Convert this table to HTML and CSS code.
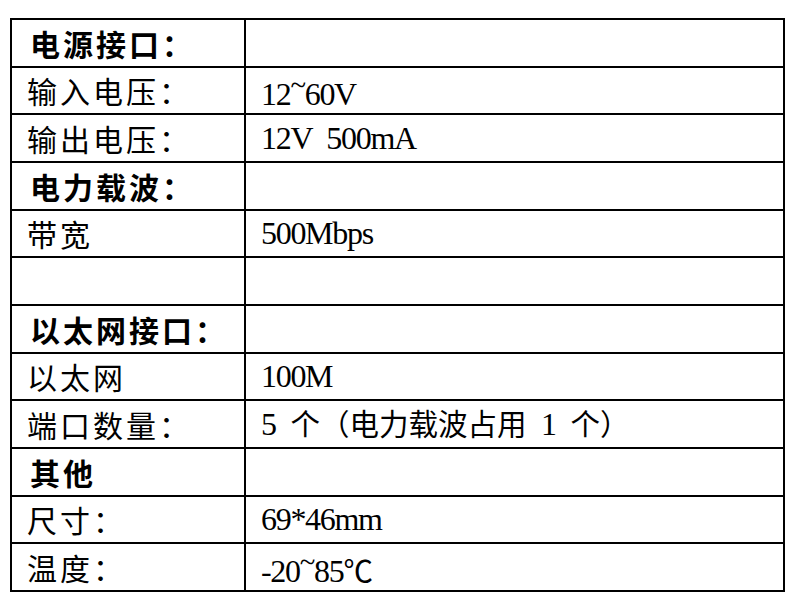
FILE: index.html
```html
<!DOCTYPE html>
<html lang="zh-CN">
<head>
<meta charset="utf-8">
<title>参数</title>
<link rel="stylesheet" href="styles.css">
</head>
<body>
<table class="spec">
  <colgroup><col class="c1"><col class="c2"></colgroup>
  <tbody>
    <tr><td class="k head">电源接口：</td><td class="v"></td></tr>
    <tr><td class="k">输入电压：</td><td class="v"><span class="lat">12<span class="tl">~</span>60V</span></td></tr>
    <tr><td class="k">输出电压：</td><td class="v"><span class="lat">12V 500mA</span></td></tr>
    <tr><td class="k head">电力载波：</td><td class="v"></td></tr>
    <tr><td class="k">带宽</td><td class="v"><span class="lat">500Mbps</span></td></tr>
    <tr><td class="k"></td><td class="v"></td></tr>
    <tr><td class="k head">以太网接口：</td><td class="v"></td></tr>
    <tr><td class="k">以太网</td><td class="v"><span class="lat">100M</span></td></tr>
    <tr><td class="k">端口数量：</td><td class="v"><span class="lat">5 </span>个（电力载波占用<span class="lat"> 1 </span>个）</td></tr>
    <tr><td class="k head">其他</td><td class="v"></td></tr>
    <tr><td class="k">尺寸：</td><td class="v"><span class="lat">69*46mm</span></td></tr>
    <tr><td class="k">温度：</td><td class="v"><span class="lat">-20<span class="tl">~</span>85</span>℃</td></tr>
  </tbody>
</table>
</body>
</html>
```
FILE: styles.css
```css
html, body {
  margin: 0;
  padding: 0;
  background: #fff;
}

body {
  color: #000;
  font-family: "Liberation Serif", "Noto Sans CJK SC", serif;
}

.spec {
  margin: 18px 0 0 10px;
  width: 773px;
  border-collapse: collapse;
  table-layout: fixed;
  border: 2px solid #000;
}

.spec .c1 { width: 234px; }
.spec .c2 { width: 539px; }

.spec td {
  border: 2px solid #000;
  height: 47.67px;
  padding: 0;
  box-sizing: border-box;
  vertical-align: middle;
  white-space: nowrap;
  line-height: 1;
}

.k {
  padding-left: 15px !important;
  font-family: "Noto Sans CJK SC", sans-serif;
  font-size: 30px;
  letter-spacing: 3px;
  font-weight: 400;
}

.k.head {
  font-weight: 700;
  padding-left: 18px !important;
}

.v {
  padding-left: 15px !important;
  font-family: "Noto Sans CJK SC", sans-serif;
  font-size: 29.5px;
}

.lat {
  font-family: "Liberation Serif", serif;
  font-size: 32px;
  letter-spacing: -1.3px;
  word-spacing: 8px;
}

.tl {
  display: inline-block;
  vertical-align: 0.35em;
  font-size: 0.9em;
}
```
